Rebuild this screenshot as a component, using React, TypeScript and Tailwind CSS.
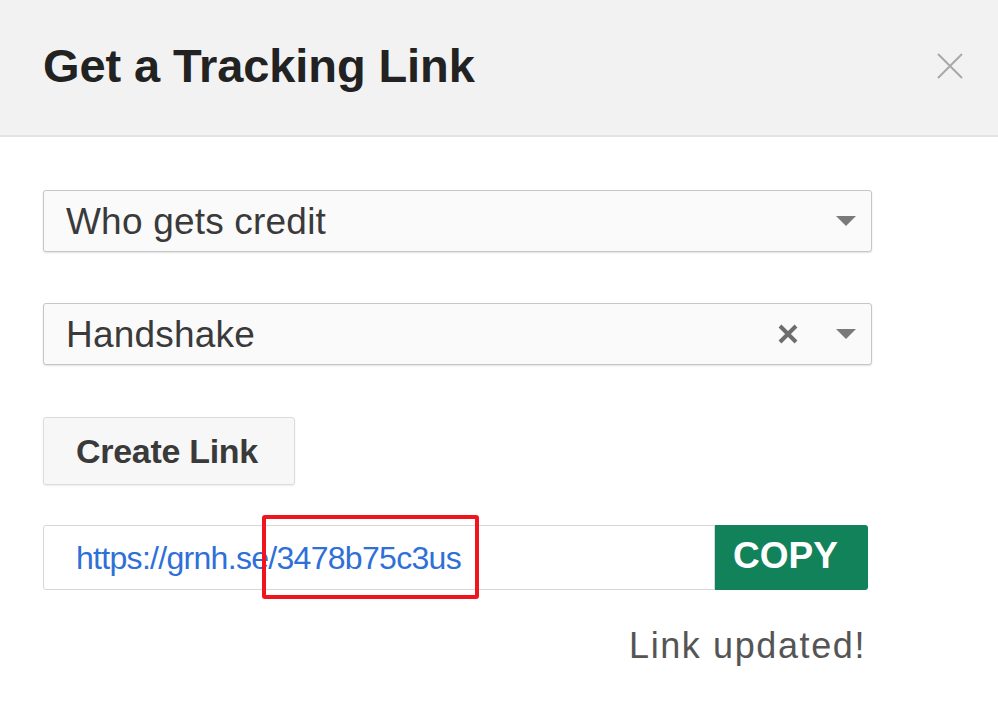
import React from "react";

function Caret() {
  return (
    <svg width="20" height="10" viewBox="0 0 20 10" className="shrink-0">
      <path d="M0 0 L20 0 L10 10 Z" fill="#7a7a7a" />
    </svg>
  );
}

function SelectBox({ value, clearable }: { value: string; clearable?: boolean }) {
  return (
    <div className="flex h-[62px] w-[829px] items-center rounded-[3px] border border-[#c6c6c6] bg-[#fafafa] pl-[22px] pr-[15px] shadow-[0_1px_2px_rgba(0,0,0,0.12)]">
      <span className="flex-1 text-[37px] leading-none tracking-[0.2px] text-[#3a3a3a]">{value}</span>
      {clearable && (
        <svg width="22" height="22" viewBox="0 0 22 22" className="mr-[37px]">
          <path d="M3 3 L19 19 M19 3 L3 19" stroke="#6d6d6d" strokeWidth="4" />
        </svg>
      )}
      <Caret />
    </div>
  );
}

export default function App() {
  return (
    <div className="h-[720px] w-[998px] bg-white font-['Liberation_Sans',Arial,sans-serif]">
      {/* header */}
      <div className="flex h-[137px] items-center justify-between border-b-2 border-[#e3e3e3] bg-[#f2f2f2] pb-[4px] pl-[43px] pr-[34px]">
        <h1 className="text-[47px] font-bold leading-none tracking-[-0.1px] text-[#222]">Get a Tracking Link</h1>
        <svg width="28" height="28" viewBox="0 0 28 28">
          <path d="M2 2 L26 26 M26 2 L2 26" stroke="#a8a8a8" strokeWidth="2" />
        </svg>
      </div>

      <div className="flex flex-col pl-[43px] pt-[53px]">
        <SelectBox value="Who gets credit" />
        <div className="h-[51px]" />
        <SelectBox value="Handshake" clearable />

        <button className="mt-[52px] flex h-[68px] w-[252px] items-center rounded-[3px] border border-[#dcdcdc] bg-[#f7f7f7] pl-[32px] text-[34px] font-bold leading-none tracking-[-0.3px] text-[#3a3a3a] shadow-[0_1px_2px_rgba(0,0,0,0.08)]">
          Create Link
        </button>

        {/* link + copy */}
        <div className="mt-[40px] flex h-[65px] w-[825px]">
          <div className="relative flex flex-1 items-center rounded-l-[3px] border border-[#d6d6d6] bg-white pl-[32px]">
            <span className="text-[32px] leading-none tracking-[-0.7px] text-[#2f6fd8]">https://grnh.se/3478b75c3us</span>
            <div className="absolute left-[218px] top-[-11px] h-[84px] w-[217px] rounded-[3px] border-[4px] border-[#f0141e]" />
          </div>
          <button className="flex w-[153px] items-center justify-center rounded-r-[3px] bg-[#12825a] pb-[4px] pr-[12px] text-[37px] font-bold leading-none text-white">
            COPY
          </button>
        </div>

        <div className="mt-[38px] w-[823px] text-right text-[36px] leading-none tracking-[1.6px] text-[#555]">
          Link updated!
        </div>
      </div>
    </div>
  );
}
